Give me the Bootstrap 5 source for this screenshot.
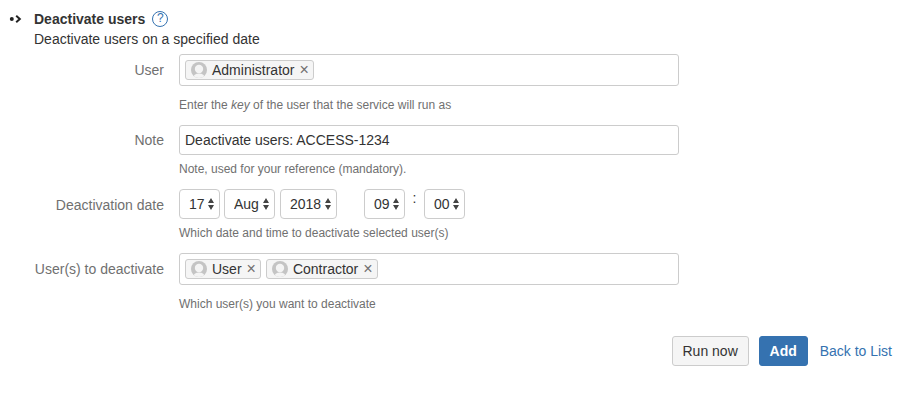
<!DOCTYPE html>
<html lang="en">
<head>
    <meta charset="UTF-8">
    <meta name="viewport" content="width=device-width, initial-scale=1.0">
    <title>Deactivate users</title>
    <link href="https://cdn.jsdelivr.net/npm/bootstrap@5.3.0/dist/css/bootstrap.min.css" rel="stylesheet">
    <style>
        body {
            font-family: "Liberation Sans", Arial, sans-serif;
            font-size: 14px;
            line-height: 20px;
            color: #333;
            background: #fff;
        }
        .svc-page { padding: 9px 25px 0 9px; }
        .svc-arrow { width: 25px; height: 20px; flex: none; }
        .svc-title { font-weight: 700; }
        .svc-help {
            width: 16px;
            height: 16px;
            margin-left: 7px;
            border: 1.5px solid #3572b0;
            border-radius: 50%;
            color: #3572b0;
            font-size: 12px;
            line-height: 13px;
            text-align: center;
        }
        .svc-form { margin-top: 5px; }
        .svc-row { display: flex; margin-bottom: 12px; }
        .svc-label {
            width: 155px;
            flex: none;
            padding-top: 5px;
            text-align: right;
            color: #707070;
        }
        .svc-label-low { padding-top: 6px; }
        .svc-field { width: 500px; margin-left: 15px; flex: none; }
        .svc-hint { font-size: 12px; line-height: 16px; color: #707070; margin-top: 6px; }
        .svc-hint-gap { margin-top: 11px; }
        .svc-picker {
            height: 32px;
            padding: 5px;
            gap: 5px;
            border: 1px solid #ccc;
            border-radius: 3px;
            background: #fff;
        }
        .svc-chip {
            height: 20px;
            padding: 0 4px 0 5px;
            border: 1px solid #ccc;
            border-radius: 3px;
            background: #f5f5f5;
            color: #333;
            line-height: 18px;
        }
        .svc-chip svg { margin-right: 5px; flex: none; }
        .svc-remove { margin-left: 5px; color: #707070; font-size: 16px; }
        .svc-text.form-control {
            height: 30px;
            padding: 4px 5px;
            font-size: 14px;
            line-height: 20px;
            color: #333;
            border-color: #ccc;
            border-radius: 3px;
            box-shadow: none;
        }
        .svc-select.form-select {
            height: 30px;
            padding: 0 0 0 9px;
            font-size: 14px;
            line-height: 20px;
            color: #333;
            border-color: #ccc;
            border-radius: 4px;
            background-color: #fff;
            background-image: url("data:image/svg+xml,%3Csvg xmlns='http://www.w3.org/2000/svg' width='8' height='12'%3E%3Cpath fill='%23444' d='M4 0l3 5H1zM4 12L1 7h6z'/%3E%3C/svg%3E");
            background-position: right 4px center;
            background-size: 8px 12px;
        }
        .svc-w-day { width: 41px; }
        .svc-w-mon { width: 51px; margin-left: 4px; }
        .svc-w-year { width: 57px; margin-left: 5px; }
        .svc-w-hour { width: 41px; margin-left: 27px; }
        .svc-w-min { width: 41px; }
        .svc-colon { width: 19px; text-align: center; line-height: 18px; color: #333; }
        .svc-actions { margin-top: 24px; }
        .svc-btn.btn {
            height: 30px;
            padding: 4px 0;
            font-size: 14px;
            line-height: 20px;
            white-space: nowrap;
            border-radius: 3px;
        }
        .svc-run.btn { width: 77px; color: #333; background: #f5f5f5; border-color: #ccc; }
        .svc-add.btn { width: 49px; margin-left: 10px; font-weight: 700; color: #fff; background: #3572b0; border-color: #3572b0; }
        .svc-back { margin-left: 12px; color: #3572b0; text-decoration: none; }
    </style>
</head>
<body>
    <svg width="0" height="0" class="position-absolute">
        <symbol id="avatar" viewBox="0 0 16 16">
            <clipPath id="avatar-clip"><circle cx="8" cy="8" r="8"/></clipPath>
            <g clip-path="url(#avatar-clip)">
                <rect width="16" height="16" fill="#c4c4c4"/>
                <circle cx="8" cy="7" r="4.2" fill="#f4f4f4"/>
                <ellipse cx="8" cy="16" rx="6" ry="4.5" fill="#f4f4f4"/>
            </g>
        </symbol>
    </svg>

    <div class="svc-page">
        <div class="d-flex">
            <svg class="svc-arrow" viewBox="0 0 25 20">
                <circle cx="2.8" cy="10" r="2" fill="#222"/>
                <path d="M7.2 6.8l3.6 3.2-3.6 3.2" fill="none" stroke="#222" stroke-width="2"/>
            </svg>
            <div>
                <div class="d-flex align-items-center">
                    <span class="svc-title">Deactivate users</span>
                    <span class="svc-help">?</span>
                </div>
                <div>Deactivate users on a specified date</div>
            </div>
        </div>

        <form class="svc-form">
            <div class="svc-row">
                <div class="svc-label svc-label-low">User</div>
                <div class="svc-field">
                    <div class="svc-picker d-flex">
                        <span class="svc-chip d-flex align-items-center">
                            <svg width="16" height="16"><use href="#avatar"/></svg>Administrator<span class="svc-remove">×</span>
                        </span>
                    </div>
                    <div class="svc-hint svc-hint-gap">Enter the <em>key</em> of the user that the service will run as</div>
                </div>
            </div>

            <div class="svc-row">
                <div class="svc-label">Note</div>
                <div class="svc-field">
                    <input type="text" class="form-control svc-text" value="Deactivate users: ACCESS-1234">
                    <div class="svc-hint">Note, used for your reference (mandatory).</div>
                </div>
            </div>

            <div class="svc-row">
                <div class="svc-label svc-label-low">Deactivation date</div>
                <div class="svc-field">
                    <div class="d-flex">
                        <select class="form-select svc-select svc-w-day"><option>17</option></select>
                        <select class="form-select svc-select svc-w-mon"><option>Aug</option></select>
                        <select class="form-select svc-select svc-w-year"><option>2018</option></select>
                        <select class="form-select svc-select svc-w-hour"><option>09</option></select>
                        <span class="svc-colon">:</span>
                        <select class="form-select svc-select svc-w-min"><option>00</option></select>
                    </div>
                    <div class="svc-hint">Which date and time to deactivate selected user(s)</div>
                </div>
            </div>

            <div class="svc-row">
                <div class="svc-label svc-label-low">User(s) to deactivate</div>
                <div class="svc-field">
                    <div class="svc-picker d-flex">
                        <span class="svc-chip d-flex align-items-center">
                            <svg width="16" height="16"><use href="#avatar"/></svg>User<span class="svc-remove">×</span>
                        </span>
                        <span class="svc-chip d-flex align-items-center">
                            <svg width="16" height="16"><use href="#avatar"/></svg>Contractor<span class="svc-remove">×</span>
                        </span>
                    </div>
                    <div class="svc-hint svc-hint-gap">Which user(s) you want to deactivate</div>
                </div>
            </div>

            <div class="svc-actions d-flex justify-content-end align-items-center">
                <button type="button" class="btn svc-btn svc-run">Run now</button>
                <button type="button" class="btn svc-btn svc-add">Add</button>
                <a href="#" class="svc-back">Back to List</a>
            </div>
        </form>
    </div>

    <script src="https://cdn.jsdelivr.net/npm/bootstrap@5.3.0/dist/js/bootstrap.bundle.min.js"></script>
</body>
</html>
